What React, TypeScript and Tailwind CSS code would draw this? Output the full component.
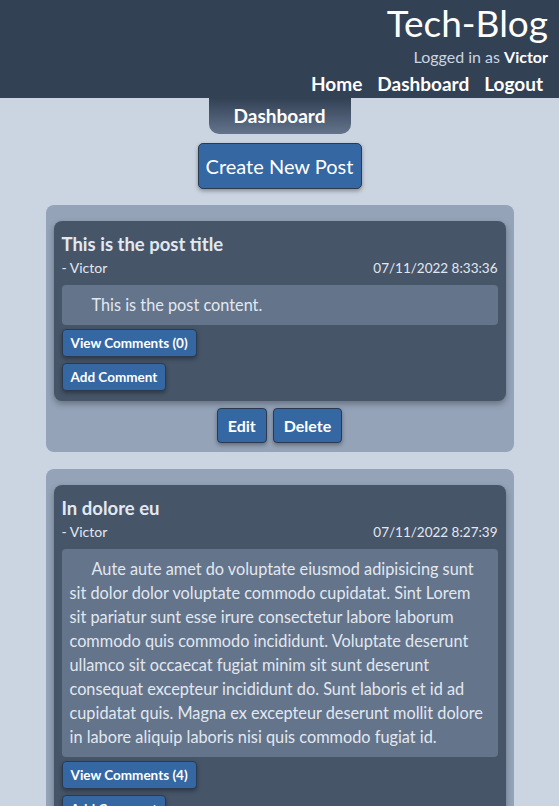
const posts = [
  {
    title: "This is the post title",
    author: "Victor",
    date: "07/11/2022 8:33:36",
    content: "This is the post content.",
    comments: 0,
  },
  {
    title: "In dolore eu",
    author: "Victor",
    date: "07/11/2022 8:27:39",
    content:
      "Aute aute amet do voluptate eiusmod adipisicing sunt sit dolor dolor voluptate commodo cupidatat. Sint Lorem sit pariatur sunt esse irure consectetur labore laborum commodo quis commodo incididunt. Voluptate deserunt ullamco sit occaecat fugiat minim sit sunt deserunt consequat excepteur incididunt do. Sunt laboris et id ad cupidatat quis. Magna ex excepteur deserunt mollit dolore in labore aliquip laboris nisi quis commodo fugiat id.",
    comments: 4,
  },
];

const btn =
  "bg-[#3567a3] text-white font-bold border border-[#2b3a4f] rounded shadow-[0_2px_4px_rgba(0,0,0,0.35)]";

export default function App() {
  return (
    <div className="min-h-[806px] bg-[#cbd5e1] font-['Lato',sans-serif] text-white">
      <header className="bg-[#334155] h-[98px] flex flex-col items-end pr-[11px]">
        <h1 className="text-[37px] leading-[46px] font-normal">Tech-Blog</h1>
        <p className="text-[16px] leading-[22px] text-[#cbd5e1]">
          Logged in as <span className="font-bold text-white">Victor</span>
        </p>
        <nav className="flex gap-[15px] text-[19px] leading-[26px] font-bold pr-[5px] mt-[3px]">
          <a>Home</a>
          <a>Dashboard</a>
          <a>Logout</a>
        </nav>
      </header>

      <main className="flex flex-col items-center">
        <div className="w-[142px] h-[36px] rounded-b-[10px] bg-gradient-to-b from-[#334155] to-[#64748b] flex items-center justify-center text-[19px] font-bold">
          Dashboard
        </div>
        <button
          className={`${btn} mt-[9px] h-[46px] w-[164px] text-[20px] font-normal rounded-[5px]`}
        >
          Create New Post
        </button>

        <div className="w-[468px] mt-[16px] flex flex-col gap-[17px]">
          {posts.map((p, i) => (
            <div key={i} className="bg-[#94a3b8] rounded-[8px] px-[8px] pt-[16px] pb-[9px]">
              <div className="bg-[#475569] rounded-[8px] shadow-[0_3px_6px_rgba(0,0,0,0.3)] px-[8px] pt-[10px] pb-[10px] text-[#e2e8f0]">
                <h2 className="text-[18.5px] leading-[26px] font-bold">{p.title}</h2>
                <div className="flex justify-between text-[14px] leading-[20px] mt-[1px]">
                  <span>- {p.author}</span>
                  <span className="text-[13.5px]">{p.date}</span>
                </div>
                <p className="bg-[#64748b] rounded-[4px] mt-[7px] px-[8px] py-[8px] text-[16.3px] leading-[24px] indent-[22px]">
                  {p.content}
                </p>
                <div className="flex flex-col items-start gap-[6px] mt-[4px]">
                  <button className={`${btn} h-[28px] px-[8px] text-[13.5px]`}>
                    View Comments ({p.comments})
                  </button>
                  <button className={`${btn} h-[28px] px-[8px] text-[13.5px]`}>
                    Add Comment
                  </button>
                </div>
              </div>
              <div className="flex justify-center gap-[6px] mt-[7px]">
                <button className={`${btn} h-[35px] px-[10px] text-[16px]`}>Edit</button>
                <button className={`${btn} h-[35px] px-[10px] text-[16px]`}>Delete</button>
              </div>
            </div>
          ))}
        </div>
      </main>
    </div>
  );
}
